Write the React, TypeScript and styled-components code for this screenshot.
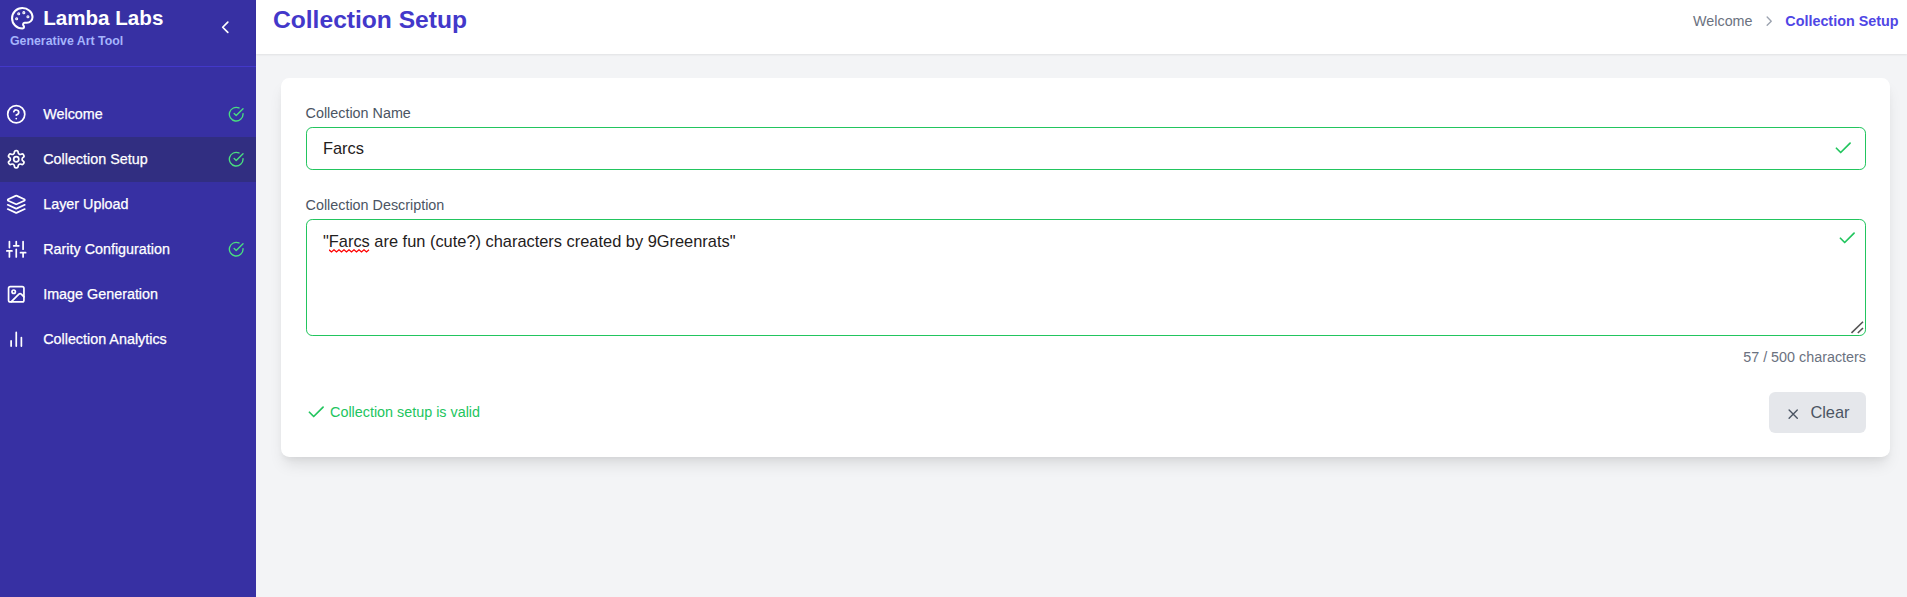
import React from "react";
import styled, { createGlobalStyle } from "styled-components";

const GlobalStyle = createGlobalStyle`
  *, *::before, *::after { box-sizing: border-box; }
  body {
    margin: 0;
    font-family: "Liberation Sans", Arial, sans-serif;
    background: #f3f4f6;
    overflow: hidden;
  }
`;

const Page = styled.div`
  display: flex;
  height: 597px;
`;

const Sidebar = styled.aside`
  width: 256px;
  flex-shrink: 0;
  background: #3730a3;
  color: #fff;
`;

const Brand = styled.div`
  display: flex;
  justify-content: space-between;
  align-items: flex-start;
  height: 67px;
  padding: 6px 20.5px 0 10px;
  border-bottom: 1px solid #4338ca;
`;

const BrandName = styled.div`
  display: flex;
  align-items: center;
  gap: 8.6px;
  height: 24px;
  font-size: 20.6px;
  font-weight: 700;
  white-space: nowrap;
`;

const Tagline = styled.div`
  margin-top: 3px;
  font-size: 12.35px;
  line-height: 16.4px;
  font-weight: 700;
  color: #a5b4fc;
`;

const CollapseButton = styled.button`
  display: flex;
  padding: 0;
  margin-top: 11px;
  border: 0;
  background: none;
  color: #fff;
`;

const Nav = styled.nav`
  padding-top: 25px;
`;

const NavItem = styled.a<{ $active?: boolean }>`
  display: flex;
  align-items: center;
  height: 45px;
  padding: 0 11.8px 0 6px;
  background: ${(p) => (p.$active ? "#312e81" : "transparent")};
  font-size: 14.35px;
  color: #fff;
  -webkit-text-stroke: 0.25px #fff;
`;

const NavLabel = styled.span`
  flex: 1;
  margin-left: 16.7px;
  padding-bottom: 2px;
`;

const Main = styled.main`
  flex: 1;
  min-width: 0;
`;

const Header = styled.header`
  display: flex;
  justify-content: space-between;
  height: 54px;
  padding: 0 8.5px 0 17px;
  background: #fff;
  box-shadow: 0 1px 2px rgba(0, 0, 0, 0.08);
`;

const Title = styled.h1`
  margin: 5px 0 0;
  font-size: 24.6px;
  line-height: 29px;
  font-weight: 700;
  color: #4338ca;
`;

const Breadcrumb = styled.div`
  display: flex;
  align-items: center;
  height: 42px;
  font-size: 14.35px;
  color: #6b7280;
`;

const Separator = styled.span`
  display: flex;
  margin: 0 8.2px;
  color: #9ca3af;
`;

const Current = styled.span`
  font-weight: 700;
  color: #4f46e5;
`;

const Card = styled.section`
  height: 379px;
  margin: 24px 17px 0 25px;
  padding: 24.6px 24px 0 24.6px;
  border-radius: 8.2px;
  background: #fff;
  box-shadow: 0 10px 15px -3px rgba(0, 0, 0, 0.1), 0 4px 6px -2px rgba(0, 0, 0, 0.05);
`;

const Label = styled.label`
  display: block;
  height: 20.5px;
  margin-bottom: 4px;
  font-size: 14.35px;
  line-height: 20.5px;
  color: #4b5563;
`;

const Field = styled.div<{ $height: number; $multiline?: boolean }>`
  position: relative;
  display: flex;
  justify-content: space-between;
  align-items: ${(p) => (p.$multiline ? "flex-start" : "center")};
  height: ${(p) => p.$height}px;
  padding: ${(p) => (p.$multiline ? "8px 7.5px 0 16.4px" : "0 12px 0 16.4px")};
  border: 1px solid #22c55e;
  border-radius: 6.2px;
  font-size: 16.4px;
  line-height: 26px;
  color: #1f2020;
`;

const SingleLine = styled.span`
  padding-bottom: 2px;
`;

const FieldGap = styled.div`
  height: 24.6px;
`;

const CheckSlot = styled.span`
  display: flex;
  color: #22c55e;
`;

const Misspelled = styled.span`
  position: relative;
`;

const Squiggle = styled.svg`
  position: absolute;
  left: 0;
  bottom: -3px;
  width: 41px;
  height: 4px;
`;

const Grip = styled.svg`
  position: absolute;
  right: 1px;
  bottom: 1px;
`;

const Counter = styled.div`
  margin-top: 11px;
  font-size: 14.35px;
  line-height: 20.5px;
  text-align: right;
  color: #6b7280;
`;

const Footer = styled.div`
  display: flex;
  justify-content: space-between;
  align-items: center;
  margin-top: 24.5px;
`;

const Status = styled.div`
  display: flex;
  align-items: center;
  gap: 4px;
  font-size: 14.35px;
  color: #22c55e;
`;

const ClearButton = styled.button`
  display: flex;
  align-items: center;
  width: 97px;
  height: 41px;
  padding: 0 0 0 16px;
  border: 0;
  border-radius: 6.2px;
  background: #e5e7eb;
  font-family: inherit;
  font-size: 16.4px;
  color: #4b5563;
`;

const ClearIcon = styled.span`
  display: flex;
  margin: 4px 9px 0 0;
`;

const Icon = ({ size, children }: { size: number; children: React.ReactNode }) => (
  <svg
    width={size}
    height={size}
    viewBox="0 0 24 24"
    fill="none"
    stroke="currentColor"
    strokeWidth={2}
    strokeLinecap="round"
    strokeLinejoin="round"
  >
    {children}
  </svg>
);

const Check = () => (
  <Icon size={20.5}>
    <polyline points="20 6 9 17 4 12" />
  </Icon>
);

const items = [
  {
    label: "Welcome",
    done: true,
    icon: (
      <>
        <circle cx="12" cy="12" r="10" />
        <path d="M9.09 9a3 3 0 0 1 5.83 1c0 2-3 3-3 3" />
        <path d="M12 17h.01" />
      </>
    ),
  },
  {
    label: "Collection Setup",
    done: true,
    active: true,
    icon: (
      <>
        <path d="M12.22 2h-.44a2 2 0 0 0-2 2v.18a2 2 0 0 1-1 1.73l-.43.25a2 2 0 0 1-2 0l-.15-.08a2 2 0 0 0-2.73.73l-.22.38a2 2 0 0 0 .73 2.73l.15.1a2 2 0 0 1 1 1.72v.51a2 2 0 0 1-1 1.74l-.15.09a2 2 0 0 0-.73 2.73l.22.38a2 2 0 0 0 2.73.73l.15-.08a2 2 0 0 1 2 0l.43.25a2 2 0 0 1 1 1.73V20a2 2 0 0 0 2 2h.44a2 2 0 0 0 2-2v-.18a2 2 0 0 1 1-1.73l.43-.25a2 2 0 0 1 2 0l.15.08a2 2 0 0 0 2.73-.73l.22-.39a2 2 0 0 0-.73-2.73l-.15-.08a2 2 0 0 1-1-1.74v-.5a2 2 0 0 1 1-1.74l.15-.09a2 2 0 0 0 .73-2.73l-.22-.38a2 2 0 0 0-2.73-.73l-.15.08a2 2 0 0 1-2 0l-.43-.25a2 2 0 0 1-1-1.73V4a2 2 0 0 0-2-2z" />
        <circle cx="12" cy="12" r="3" />
      </>
    ),
  },
  {
    label: "Layer Upload",
    icon: (
      <>
        <path d="m12.83 2.18a2 2 0 0 0-1.66 0L2.6 6.08a1 1 0 0 0 0 1.83l8.58 3.91a2 2 0 0 0 1.66 0l8.58-3.9a1 1 0 0 0 0-1.83Z" />
        <path d="m22 17.65-9.17 4.16a2 2 0 0 1-1.66 0L2 17.65" />
        <path d="m22 12.65-9.17 4.16a2 2 0 0 1-1.66 0L2 12.65" />
      </>
    ),
  },
  {
    label: "Rarity Configuration",
    done: true,
    icon: (
      <path d="M4 21v-7M4 10V3M12 21v-9M12 8V3M20 21v-5M20 12V3M1 14h6M9 8h6M17 16h6" />
    ),
  },
  {
    label: "Image Generation",
    icon: (
      <>
        <rect x="3" y="3" width="18" height="18" rx="2" />
        <circle cx="9" cy="9" r="2" />
        <path d="m21 15-3.086-3.086a2 2 0 0 0-2.828 0L6 21" />
      </>
    ),
  },
  { label: "Collection Analytics", icon: <path d="M18 20V10M12 20V4M6 20v-6" /> },
];

export default function App() {
  return (
    <>
      <GlobalStyle />
      <Page>
        <Sidebar>
          <Brand>
            <div>
              <BrandName>
                <Icon size={24.6}>
                  <circle cx="13.5" cy="6.5" r=".5" fill="currentColor" />
                  <circle cx="17.5" cy="10.5" r=".5" fill="currentColor" />
                  <circle cx="8.5" cy="7.5" r=".5" fill="currentColor" />
                  <circle cx="6.5" cy="12.5" r=".5" fill="currentColor" />
                  <path d="M12 2C6.5 2 2 6.5 2 12s4.5 10 10 10c.926 0 1.648-.746 1.648-1.688 0-.437-.18-.835-.437-1.125-.29-.289-.438-.652-.438-1.125a1.64 1.64 0 0 1 1.668-1.668h1.996c3.051 0 5.555-2.503 5.555-5.554C21.965 6.012 17.461 2 12 2z" />
                </Icon>
                Lamba Labs
              </BrandName>
              <Tagline>Generative Art Tool</Tagline>
            </div>
            <CollapseButton aria-label="Collapse">
              <Icon size={20.5}>
                <path d="m15 18-6-6 6-6" />
              </Icon>
            </CollapseButton>
          </Brand>
          <Nav>
            {items.map((item) => (
              <NavItem key={item.label} $active={item.active}>
                <Icon size={20.5}>{item.icon}</Icon>
                <NavLabel>{item.label}</NavLabel>
                {item.done && (
                  <svg width="16.4" height="16.4" viewBox="0 0 24 24" fill="none" stroke="#4ade80" strokeWidth="2" strokeLinecap="round" strokeLinejoin="round">
                    <path d="M22 11.08V12a10 10 0 1 1-5.93-9.14" />
                    <path d="m9 11 3 3L22 4" />
                  </svg>
                )}
              </NavItem>
            ))}
          </Nav>
        </Sidebar>
        <Main>
          <Header>
            <Title>Collection Setup</Title>
            <Breadcrumb>
              <span>Welcome</span>
              <Separator>
                <Icon size={16.4}>
                  <path d="m9 18 6-6-6-6" />
                </Icon>
              </Separator>
              <Current>Collection Setup</Current>
            </Breadcrumb>
          </Header>
          <Card>
            <Label>Collection Name</Label>
            <Field $height={43}>
              <SingleLine>Farcs</SingleLine>
              <CheckSlot>
                <Check />
              </CheckSlot>
            </Field>
            <FieldGap />
            <Label>Collection Description</Label>
            <Field $height={116.6} $multiline>
              <span>
                "
                <Misspelled>
                  Farcs
                  <Squiggle viewBox="0 0 41 4" fill="none" stroke="#f00" strokeWidth="1.3">
                    <path d="M0 .8 2.5 3 5 .8 7.5 3 10 .8 12.5 3 15 .8 17.5 3 20 .8 22.5 3 25 .8 27.5 3 30 .8 32.5 3 35 .8 37.5 3 40 .8" />
                  </Squiggle>
                </Misspelled>{" "}
                are fun (cute?) characters created by 9Greenrats"
              </span>
              <CheckSlot>
                <Check />
              </CheckSlot>
              <Grip width="13" height="13" viewBox="0 0 13 13" stroke="#555" strokeWidth="1.6">
                <path d="M.5 12 12 .8M6.8 12 12 7" />
              </Grip>
            </Field>
            <Counter>57 / 500 characters</Counter>
            <Footer>
              <Status>
                <Check />
                Collection setup is valid
              </Status>
              <ClearButton>
                <ClearIcon>
                  <Icon size={16.4}>
                    <path d="M18 6 6 18M6 6l12 12" />
                  </Icon>
                </ClearIcon>
                Clear
              </ClearButton>
            </Footer>
          </Card>
        </Main>
      </Page>
    </>
  );
}
